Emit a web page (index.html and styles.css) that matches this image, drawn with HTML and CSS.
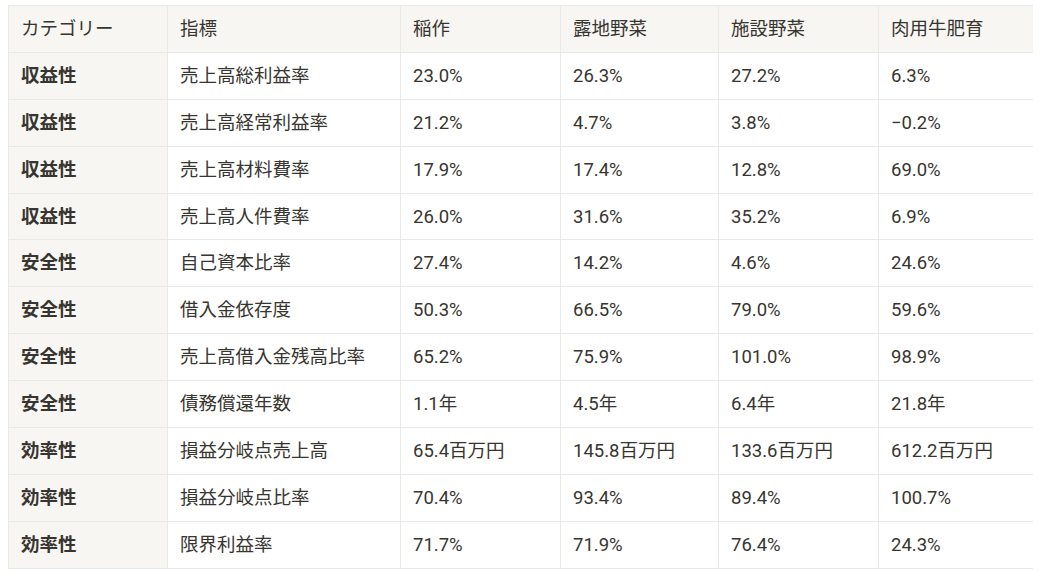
FILE: index.html
```html
<!DOCTYPE html>
<html lang="ja">
<head>
<meta charset="utf-8">
<title>経営指標</title>
<link rel="stylesheet" href="styles.css">
</head>
<body>
<table class="metrics">
  <colgroup>
    <col class="c-cat">
    <col class="c-ind">
    <col class="c-val">
    <col class="c-val2">
    <col class="c-val">
    <col class="c-val2">
  </colgroup>
  <thead>
    <tr>
      <th>カテゴリー</th>
      <th>指標</th>
      <th>稲作</th>
      <th>露地野菜</th>
      <th>施設野菜</th>
      <th>肉用牛肥育</th>
    </tr>
  </thead>
  <tbody>
    <tr><td class="cat">収益性</td><td>売上高総利益率</td><td>23.0%</td><td>26.3%</td><td>27.2%</td><td>6.3%</td></tr>
    <tr><td class="cat">収益性</td><td>売上高経常利益率</td><td>21.2%</td><td>4.7%</td><td>3.8%</td><td>−0.2%</td></tr>
    <tr><td class="cat">収益性</td><td>売上高材料費率</td><td>17.9%</td><td>17.4%</td><td>12.8%</td><td>69.0%</td></tr>
    <tr><td class="cat">収益性</td><td>売上高人件費率</td><td>26.0%</td><td>31.6%</td><td>35.2%</td><td>6.9%</td></tr>
    <tr><td class="cat">安全性</td><td>自己資本比率</td><td>27.4%</td><td>14.2%</td><td>4.6%</td><td>24.6%</td></tr>
    <tr><td class="cat">安全性</td><td>借入金依存度</td><td>50.3%</td><td>66.5%</td><td>79.0%</td><td>59.6%</td></tr>
    <tr><td class="cat">安全性</td><td>売上高借入金残高比率</td><td>65.2%</td><td>75.9%</td><td>101.0%</td><td>98.9%</td></tr>
    <tr><td class="cat">安全性</td><td>債務償還年数</td><td>1.1年</td><td>4.5年</td><td>6.4年</td><td>21.8年</td></tr>
    <tr><td class="cat">効率性</td><td>損益分岐点売上高</td><td>65.4百万円</td><td>145.8百万円</td><td>133.6百万円</td><td>612.2百万円</td></tr>
    <tr><td class="cat">効率性</td><td>損益分岐点比率</td><td>70.4%</td><td>93.4%</td><td>89.4%</td><td>100.7%</td></tr>
    <tr><td class="cat">効率性</td><td>限界利益率</td><td>71.7%</td><td>71.9%</td><td>76.4%</td><td>24.3%</td></tr>
  </tbody>
</table>
</body>
</html>
```
FILE: styles.css
```css
html, body {
  background: #ffffff;
}
body {
  margin: 5px 8px 0 8px;
  font-family: Roboto, "Noto Sans CJK JP", sans-serif;
  font-size: 18.5px;
  color: #37352f;
}
.metrics {
  width: 1028px;
  border-collapse: collapse;
  table-layout: fixed;
}
.c-cat { width: 159px; }
.c-ind { width: 233px; }
.c-val { width: 160px; }
.c-val2 { width: 158px; }
.metrics th,
.metrics td {
  height: 45.9px;
  padding: 0 12px;
  border: 1px solid #e9e9e7;
  text-align: left;
  vertical-align: middle;
  white-space: nowrap;
  line-height: 24px;
}
.metrics th {
  font-weight: 400;
  background: #f7f6f3;
}
.metrics td.cat {
  font-weight: 700;
  background: #f7f6f3;
}
```
